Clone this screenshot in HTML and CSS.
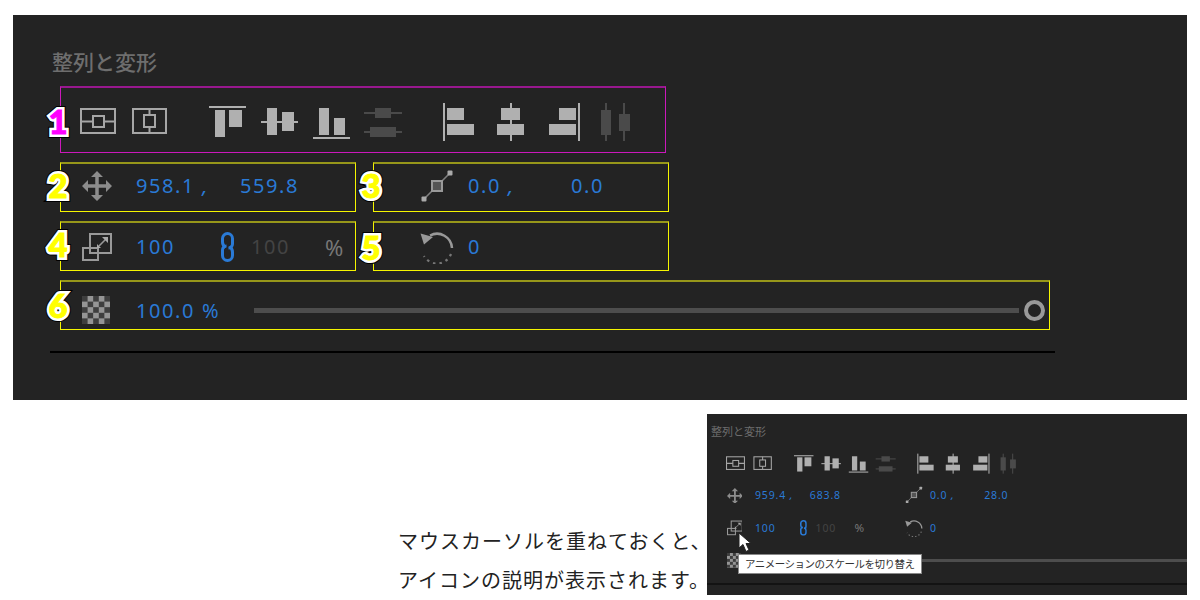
FILE: index.html
```html
<!DOCTYPE html>
<html lang="ja">
<head>
  <meta charset="UTF-8">
  <title>整列と変形</title>
  <link rel="stylesheet" href="styles.css">
</head>
<body>

  <svg class="defs">
    <symbol id="tools" viewBox="80 98 562 44">
      <g class="ln" fill="none" stroke-width="2">
        <rect x="81" y="109" width="34" height="24"/>
        <rect x="93" y="116" width="11" height="11"/>
        <path d="M81 121.5h12M104 121.5h11"/>
        <rect x="133" y="109" width="33" height="24"/>
        <rect x="144" y="115" width="11" height="12"/>
        <path d="M149.5 109v6M149.5 127v6"/>
      </g>
      <g class="fl">
        <rect x="209" y="106" width="37" height="2"/>
        <rect x="215" y="110" width="10" height="27"/>
        <rect x="229" y="110" width="13" height="17"/>
        <rect x="261" y="121" width="37" height="2"/>
        <rect x="267" y="108" width="10" height="27"/>
        <rect x="282" y="112" width="12" height="19"/>
        <rect x="313" y="137" width="37" height="2"/>
        <rect x="319" y="108" width="10" height="27"/>
        <rect x="334" y="118" width="11" height="17"/>
        <rect x="443" y="103" width="2" height="38"/>
        <rect x="447" y="108" width="17" height="12"/>
        <rect x="447" y="124" width="27" height="11"/>
        <rect x="510" y="103" width="2" height="38"/>
        <rect x="501" y="108" width="19" height="12"/>
        <rect x="497" y="124" width="27" height="11"/>
        <rect x="578" y="103" width="2" height="38"/>
        <rect x="559" y="108" width="17" height="12"/>
        <rect x="549" y="124" width="27" height="11"/>
      </g>
      <g class="fl-dim">
        <rect x="364" y="112" width="38" height="2"/>
        <rect x="375" y="108" width="16" height="10"/>
        <rect x="364" y="131" width="38" height="2"/>
        <rect x="370" y="127" width="26" height="10"/>
        <rect x="605" y="103" width="2" height="38"/>
        <rect x="601" y="110" width="10" height="25"/>
        <rect x="623" y="103" width="2" height="38"/>
        <rect x="619" y="114" width="11" height="17"/>
      </g>
    </symbol>
    <symbol id="move" viewBox="0 0 30 30">
      <path d="M4 15h22M15 4v22" fill="none" stroke="#8c8c8c" stroke-width="3.500"/>
      <path d="M15 0l6 6h-12zM15 30l-6-6h12zM0 15l6-6v12zM30 15l-6 6v-12z" fill="#8c8c8c"/>
    </symbol>
    <symbol id="scale" viewBox="0 0 30 30">
      <g fill="none" stroke="#999" stroke-width="2">
        <rect x="8" y="2" width="21" height="19"/>
        <rect x="1" y="16" width="15" height="12"/>
        <path d="M17 14L24 7" stroke-width="1.600"/>
      </g>
      <path d="M26 5v6l-6-6zM15 16v-4l4 4z" fill="#aaa"/>
    </symbol>
    <symbol id="chain" viewBox="0 0 13 30">
      <g fill="none" stroke="#2a7ad6" stroke-width="3">
        <path d="M4.500 15.500C2.500 14 1.500 12.500 1.500 10V6.500a5 5 0 0 1 10 0V12a4 4 0 0 1-4 4"/>
        <path d="M8.500 14.500c2 1.500 3 3 3 5.500v3.500a5 5 0 0 1-10 0V18a4 4 0 0 1 4-4"/>
      </g>
    </symbol>
    <symbol id="curve" viewBox="0 0 34 34">
      <path d="M4 30L30 4" stroke="#808080" stroke-width="1.600"/>
      <rect x="12" y="12" width="10" height="10" fill="#555" stroke="#999" stroke-width="2"/>
      <rect x="27.500" y="1.500" width="5" height="5" rx="1" fill="#aaa"/>
      <rect x="1.500" y="27.500" width="5" height="5" rx="1" fill="#aaa"/>
    </symbol>
    <symbol id="rotate" viewBox="0 0 34 34">
      <path d="M10 5.500A15 15 0 0 1 32 18" fill="none" stroke="#999" stroke-width="2.500"/>
      <path d="M0.500 3.500L13 7L4 14.500z" fill="#999"/>
      <path d="M31 24A15 15 0 0 1 4 26" fill="none" stroke="#777" stroke-width="2.200" stroke-dasharray="2.500 4"/>
    </symbol>
  </svg>

  <div class="panel">
    <div class="panel_title">整列と変形</div>
    <div class="fields">

      <div class="row row_tools">
        <div class="box box_tools">
          <span class="badge badge_pink" data-n="1">1</span>
          <svg class="tools"><use href="#tools"/></svg>
        </div>
      </div>

      <div class="row">
        <div class="box box_up">
          <span class="badge" data-n="2">2</span>
          <svg class="icon"><use href="#move"/></svg>
          <span class="val val_x">958.1<i class="comma">,</i></span>
          <span class="val">559.8</span>
        </div>
        <div class="box box_right box_up">
          <span class="badge" data-n="3">3</span>
          <svg class="icon icon_lg"><use href="#curve"/></svg>
          <span class="val val_a">0.0<i class="comma">,</i></span>
          <span class="val">0.0</span>
        </div>
      </div>

      <div class="row">
        <div class="box">
          <span class="badge" data-n="4">4</span>
          <svg class="icon"><use href="#scale"/></svg>
          <span class="val val_s">100</span>
          <svg class="chain"><use href="#chain"/></svg>
          <span class="val val_dim">100</span>
          <span class="pct">%</span>
        </div>
        <div class="box box_right">
          <span class="badge badge_5" data-n="5">5</span>
          <svg class="icon icon_lg"><use href="#rotate"/></svg>
          <span class="val">0</span>
        </div>
      </div>

      <div class="row">
        <div class="box box_wide">
          <span class="badge badge_6" data-n="6">6</span>
          <div class="checker"></div>
          <span class="val val_o">100.0 %</span>
          <div class="slider"></div>
          <div class="knob"></div>
        </div>
      </div>
    </div>
    <div class="rule"></div>
  </div>

  <div class="bottom">
    <p class="note">マウスカーソルを重ねておくと、<br>アイコンの説明が表示されます。</p>

    <div class="panel panel_mini">
      <div class="panel_title">整列と変形</div>
      <div class="fields">
        <div class="row row_tools">
          <div class="box box_tools">
            <svg class="tools"><use href="#tools"/></svg>
          </div>
        </div>
        <div class="row">
          <div class="box box_up">
            <svg class="icon"><use href="#move"/></svg>
            <span class="val val_x">959.4<i class="comma">,</i></span>
            <span class="val">683.8</span>
          </div>
          <div class="box box_right box_up">
            <svg class="icon icon_lg"><use href="#curve"/></svg>
            <span class="val val_a">0.0<i class="comma">,</i></span>
            <span class="val">28.0</span>
          </div>
        </div>
        <div class="row">
          <div class="box">
            <svg class="icon"><use href="#scale"/></svg>
            <span class="val val_s">100</span>
            <svg class="chain"><use href="#chain"/></svg>
            <span class="val val_dim">100</span>
            <span class="pct">%</span>
          </div>
          <div class="box box_right">
            <svg class="icon icon_lg"><use href="#rotate"/></svg>
            <span class="val">0</span>
          </div>
        </div>
        <div class="row">
          <div class="box box_wide">
            <div class="checker"></div>
            <div class="slider"></div>
          </div>
        </div>
      </div>
      <div class="rule"></div>

      <svg class="cursor" viewBox="0 0 14 21">
        <path d="M1 1v15l4-3.500 3 7 3-1.500-3-6.500h5z" fill="#fff" stroke="#222" stroke-width="1"/>
      </svg>
      <div class="tooltip">アニメーションのスケールを切り替え</div>
    </div>
  </div>

</body>
</html>
```

FILE: styles.css
```css
body {
  margin: 0;
  padding: 15px 13px 0;
  background: #fff;
  font-family: "Noto Sans", "Noto Sans CJK JP", sans-serif;
}
.defs {
  display: none;
}
.panel {
  position: relative;
  height: 385px;
  padding: 34px 0 0 47px;
  box-sizing: border-box;
  background: #232323;
  overflow: hidden;
}
.panel_title {
  margin-left: -8px;
  height: 28px;
  line-height: 24px;
  font-family: "Noto Sans CJK JP", sans-serif;
  font-size: 21px;
  font-weight: 500;
  color: #6e6e6e;
}
.fields {
  display: flex;
  flex-direction: column;
  gap: 9px;
  margin-top: 9px;
}
.row {
  display: flex;
  gap: 17px;
  height: 50px;
}
.row_tools {
  height: 67px;
}
.box {
  position: relative;
  display: flex;
  align-items: center;
  flex: none;
  width: 296px;
  height: 100%;
  box-sizing: border-box;
  padding-left: 21px;
  border: 1px solid #f5f500;
  border-top: 2px solid #97971a;
}
.box_tools {
  width: 606px;
  padding-left: 19px;
  border-color: #cc18bb;
  border-top-color: #98188f;
}
.box_right {
  width: 296px;
  padding-left: 46px;
}
.box_up {
  padding-bottom: 4px;
}
.box_wide {
  width: 990px;
  padding-top: 9px;
}

/* numbered markers: black and white outlines sit behind the digit */
.badge {
  position: absolute;
  z-index: 1;
  left: -16px;
  top: 3px;
  width: 26px;
  text-align: center;
  font-family: Lato, sans-serif;
  font-weight: 900;
  font-size: 33px;
  line-height: 36px;
  color: #ff0;
  -webkit-text-stroke: 1px #ff0;
}
.badge::before,
.badge::after {
  content: attr(data-n);
  position: absolute;
  left: 0;
  top: 0;
  width: 100%;
}
.badge::before {
  z-index: -2;
  -webkit-text-stroke: 8px #000;
}
.badge::after {
  z-index: -1;
  -webkit-text-stroke: 6px #fff;
}
.badge_pink {
  top: 15px;
  color: #f0f;
  -webkit-text-stroke-color: #f0f;
}
.badge_5 {
  top: 6px;
}
.badge_6 {
  top: 5px;
}

.tools {
  flex: none;
  width: 562px;
  height: 44px;
}
.ln {
  stroke: #a6a6a6;
}
.fl {
  fill: #b0b0b0;
}
.fl-dim {
  fill: #4a4a4a;
}
.icon {
  flex: none;
  width: 30px;
  height: 30px;
  margin-right: 24px;
}
.icon_lg {
  width: 34px;
  height: 34px;
  margin-right: 14px;
}
.chain {
  flex: none;
  width: 13px;
  height: 30px;
  margin-right: 17px;
}
.val {
  flex: none;
  font-size: 20px;
  letter-spacing: 1.600px;
  color: #2a7ad6;
}
.val_x {
  width: 104px;
}
.val_a {
  width: 103px;
}
.val_s {
  width: 85px;
}
.val_o {
  width: 85px;
  white-space: nowrap;
}
.val_dim {
  width: 74px;
  color: #444;
}
.comma {
  margin-left: 7px;
}
.pct {
  font-size: 22px;
  color: #777;
}
.checker {
  flex: none;
  width: 28px;
  height: 28px;
  margin-right: 26px;
  background: repeating-conic-gradient(#959595 0 25%, #3e3e3e 0 50%) 0 0 / 11.200px 11.200px;
}
.slider {
  flex: 1;
  height: 5px;
  margin: 0 5px 0 33px;
  background: #4d4d4d;
}
.knob {
  flex: none;
  width: 21px;
  height: 21px;
  margin-right: 4px;
  box-sizing: border-box;
  border: 4px solid #999;
  border-radius: 50%;
}
.rule {
  width: 1005px;
  height: 2px;
  margin: 21px 0 0 -10px;
  background: #000;
}

.bottom {
  display: flex;
  justify-content: flex-end;
  align-items: flex-end;
  margin-top: 14px;
}
.note {
  flex: none;
  width: 309px;
  margin: 0 0 -4px;
  font-family: "Noto Sans CJK JP", sans-serif;
  font-size: 20px;
  line-height: 39px;
  letter-spacing: 1px;
  color: #222;
  white-space: nowrap;
}

/* the small screenshot is the same panel at .527 scale */
.panel_mini {
  flex: none;
  width: 480px;
  height: 181px;
  padding: 7px 0 0 7.500px;
}
.panel_mini .panel_title {
  margin-left: -3.500px;
  height: 20px;
  line-height: 20px;
  font-size: 11px;
  font-weight: 400;
}
.panel_mini .fields {
  zoom: 0.527;
  gap: 0;
  margin-top: 11px;
}
.panel_mini .row {
  height: 61.500px;
}
.panel_mini .box {
  padding-top: 0;
  padding-bottom: 0;
  border-color: transparent;
}
.panel_mini .box_wide {
  width: 1000px;
}
.panel_mini .slider {
  margin-right: 0;
}
.panel_mini .rule {
  width: 480px;
  margin: 7px 0 0 -7.500px;
  background: #131313;
}
.cursor {
  position: absolute;
  left: 31px;
  top: 118px;
  width: 14px;
  height: 21px;
}
.tooltip {
  position: absolute;
  left: 31px;
  top: 140px;
  width: 184px;
  height: 20px;
  box-sizing: border-box;
  padding-left: 6px;
  border: 1px solid #888;
  background: #fff;
  font-family: "Noto Sans CJK JP", sans-serif;
  font-size: 10.500px;
  letter-spacing: -0.500px;
  line-height: 18px;
  color: #333;
  white-space: nowrap;
}
```
